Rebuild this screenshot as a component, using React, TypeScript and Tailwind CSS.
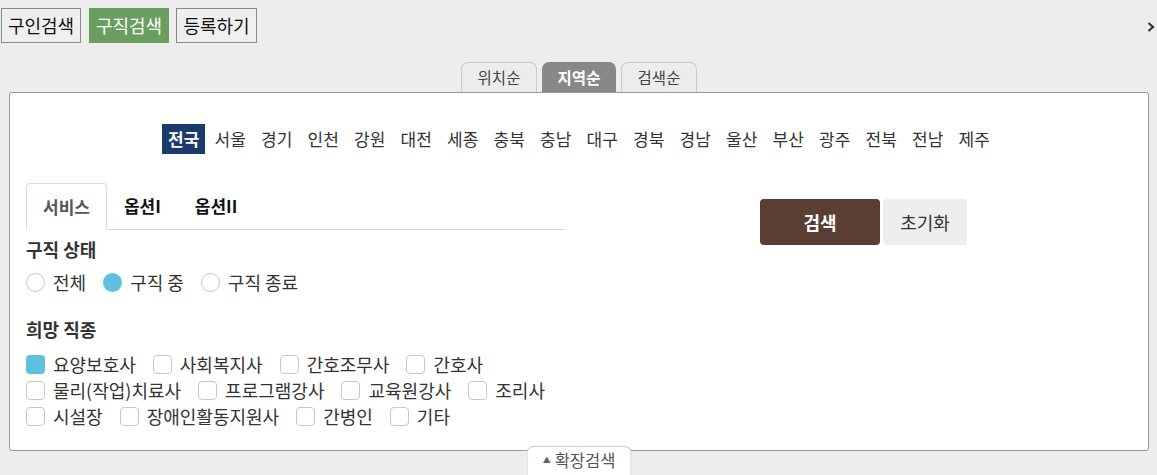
import React from "react";

const regions = ["전국","서울","경기","인천","강원","대전","세종","충북","충남","대구","경북","경남","울산","부산","광주","전북","전남","제주"];

const jobRows: { label: string; checked?: boolean }[][] = [
  [{ label: "요양보호사", checked: true }, { label: "사회복지사" }, { label: "간호조무사" }, { label: "간호사" }],
  [{ label: "물리(작업)치료사" }, { label: "프로그램강사" }, { label: "교육원강사" }, { label: "조리사" }],
  [{ label: "시설장" }, { label: "장애인활동지원사" }, { label: "간병인" }, { label: "기타" }],
];

function Radio({ label, checked }: { label: string; checked?: boolean }) {
  return (
    <div className="flex shrink-0 items-center mr-[17px] whitespace-nowrap">
      {checked ? (
        <span className="w-[19px] h-[19px] shrink-0 rounded-full bg-[#5fc1de]" />
      ) : (
        <span className="w-[19px] h-[19px] shrink-0 rounded-full border border-[#c8c8c8] bg-white" />
      )}
      <span className="ml-[8px]">{label}</span>
    </div>
  );
}

function Check({ label, checked }: { label: string; checked?: boolean }) {
  return (
    <div className="flex shrink-0 items-center mr-[17px] whitespace-nowrap">
      {checked ? (
        <span className="w-[19px] h-[19px] shrink-0 rounded-[4px] bg-[#5fc1de]" />
      ) : (
        <span className="w-[19px] h-[19px] shrink-0 rounded-[4px] border border-[#c8c8c8] bg-white" />
      )}
      <span className="ml-[8px]">{label}</span>
    </div>
  );
}

export default function App() {
  return (
    <div className="w-[1157px] h-[475px] overflow-hidden bg-[#ededed] font-['Noto_Sans_CJK_KR',sans-serif] text-[#333]">
      {/* top bar */}
      <div className="flex items-start justify-between pt-[8px] pl-[1px] pr-[2px]">
        <div className="flex">
          <button className="w-[80px] h-[35px] border border-[#8a8a8a] bg-[#efefef] text-[18px] text-[#111] leading-[33px]">구인검색</button>
          <button className="ml-[8px] w-[80px] h-[35px] border border-[#6a9e5f] bg-[#6a9e5f] text-[18px] text-white leading-[33px]">구직검색</button>
          <button className="ml-[7px] w-[81px] h-[35px] border border-[#8a8a8a] bg-[#efefef] text-[18px] text-[#111] leading-[33px]">등록하기</button>
        </div>
        <svg width="8" height="10" viewBox="0 0 8 10" className="mt-[14px]">
          <polyline points="1.5,1 6,5 1.5,9" fill="none" stroke="#333" strokeWidth="2.2" />
        </svg>
      </div>

      {/* sort tabs */}
      <div className="flex justify-center gap-[5px] mt-[19px] pl-[1px]">
        <div className="w-[76px] h-[30px] rounded-t-[7px] border border-b-0 border-[#c9c9c9] bg-[#ececec] text-center leading-[29px] text-[15.5px] text-[#444]">위치순</div>
        <div className="w-[74px] h-[30px] rounded-t-[7px] bg-[#888888] text-center leading-[30px] text-[15.5px] font-bold text-white">지역순</div>
        <div className="w-[76px] h-[30px] rounded-t-[7px] border border-b-0 border-[#c9c9c9] bg-[#ececec] text-center leading-[29px] text-[15.5px] text-[#444]">검색순</div>
      </div>

      {/* panel */}
      <div className="relative ml-[9px] w-[1140px] border border-[#9a9a9a] rounded-[3px] bg-white pt-[31px] pb-[21px] pl-[16px]">
        <div className="flex justify-center gap-[3.5px] -ml-[16px]">
          {regions.map((r, i) => (
            <div
              key={r}
              className={
                i === 0
                  ? "w-[43px] h-[30px] leading-[30px] text-center text-[17px] bg-[#1a3b6b] text-white font-bold"
                  : "w-[43px] h-[30px] leading-[30px] text-center text-[17px] text-[#333]"
              }
            >
              {r}
            </div>
          ))}
        </div>

        <div className="flex mt-[29px]">
          {/* left column */}
          <div className="w-[539px] shrink-0">
            <div className="flex h-[47px] border-b border-[#dcdcdc]">
              <div className="h-[47px] -mb-px px-[16px] border border-b-0 border-[#dcdcdc] rounded-t-[4px] bg-white leading-[46px] text-[17px] font-bold text-[#555]">서비스</div>
              <div className="h-[46px] px-[17px] leading-[46px] text-[17px] font-bold text-[#111]">옵션I</div>
              <div className="h-[46px] px-[17px] leading-[46px] text-[17px] font-bold text-[#111]">옵션II</div>
            </div>
            <div className="mt-[8px] h-[22px] leading-[22px] text-[18px] font-bold text-[#333]">구직 상태</div>
            <div className="mt-[11px] h-[22px] flex items-center text-[18px] text-[#333]">
              <Radio label="전체" />
              <Radio label="구직 중" checked />
              <Radio label="구직 종료" />
            </div>
            <div className="mt-[25px] h-[22px] leading-[22px] text-[18px] font-bold text-[#333]">희망 직종</div>
            <div className="mt-[11px] text-[18px] text-[#333]">
              {jobRows.map((row, ri) => (
                <div key={ri} className="flex items-center h-[26px]">
                  {row.map((j) => (
                    <Check key={j.label} label={j.label} checked={j.checked} />
                  ))}
                </div>
              ))}
            </div>
          </div>

          {/* right column */}
          <div className="ml-[195px] mt-[16px] flex items-start gap-[3px]">
            <button className="w-[120px] h-[46px] rounded-[4px] bg-[#5a3d33] text-white text-[18px] font-bold">검색</button>
            <button className="w-[84px] h-[46px] rounded-[4px] bg-[#eeeeee] text-[#333] text-[18px]">초기화</button>
          </div>
        </div>

        {/* expand tab */}
        <div className="absolute left-1/2 -translate-x-1/2 top-full -mt-[4px] w-[105px] h-[30px] rounded-t-[7px] border border-b-0 border-[#cccccc] bg-white flex items-start justify-center pt-[3px]">
          <span className="text-[8px] text-[#666] leading-[20px] mr-[4px]">▲</span>
          <span className="text-[16.5px] leading-[20px] text-[#555]">확장검색</span>
        </div>
      </div>
    </div>
  );
}
